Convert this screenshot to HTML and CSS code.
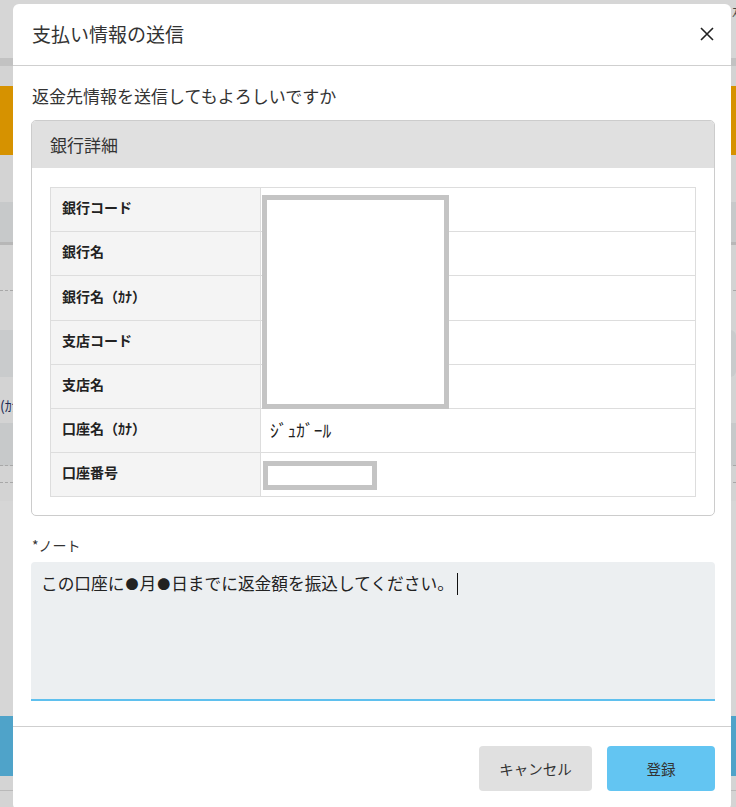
FILE: index.html
```html
<!DOCTYPE html>
<html lang="ja">
<head>
<meta charset="utf-8">
<title>支払い情報の送信</title>
<link rel="stylesheet" href="styles.css">
</head>
<body>
<div class="bg">
  <div class="bg-top"><span class="bg-corner">ｽ</span></div>
  <div class="bg-bar"></div>
  <div class="bg-gap20"></div>
  <div class="bg-orange"></div>
  <div class="bg-gap47"></div>
  <div class="bg-box1"></div>
  <div class="bg-dash45"></div>
  <div class="bg-gap40"></div>
  <div class="bg-box2"></div>
  <div class="bg-row"><span class="bg-kana">(ｶﾅ)</span></div>
  <div class="bg-box3"></div>
  <div class="bg-dash17"></div>
  <div class="bg-gap18"></div>
  <div class="bg-lower"></div>
  <div class="bg-blue"></div>
  <div class="bg-line"></div>
  <div class="bg-rest"></div>
</div>

<div class="modal">
  <div class="modal-header">
    <h1 class="modal-title">支払い情報の送信</h1>
    <button class="close-btn" aria-label="閉じる">
      <svg width="14" height="14" viewBox="0 0 14 14"><path d="M1 1 L13 13 M13 1 L1 13" stroke="#222" stroke-width="1.6" fill="none"/></svg>
    </button>
  </div>
  <div class="modal-body">
    <p class="question">返金先情報を送信してもよろしいですか</p>
    <div class="card">
      <div class="card-header">銀行詳細</div>
      <div class="card-body">
        <div class="table-wrap">
          <table class="bank-table">
            <tr><th>銀行コード</th><td></td></tr>
            <tr><th>銀行名</th><td></td></tr>
            <tr class="tall"><th>銀行名（ｶﾅ）</th><td></td></tr>
            <tr><th>支店コード</th><td></td></tr>
            <tr><th>支店名</th><td></td></tr>
            <tr><th>口座名（ｶﾅ）</th><td class="kana-val">ｼﾞｭｶﾞｰﾙ</td></tr>
            <tr><th>口座番号</th><td></td></tr>
          </table>
          <div class="redact redact-big"></div>
          <div class="redact redact-small"></div>
        </div>
      </div>
    </div>
    <div class="note-label">*ノート</div>
    <div class="note-box">この口座に<span class="dot">●</span>月<span class="dot">●</span>日までに返金額を振込してください。<span class="caret"></span></div>
  </div>
  <div class="modal-footer">
    <button class="btn btn-cancel">キャンセル</button>
    <button class="btn btn-primary">登録</button>
  </div>
</div>
</body>
</html>
```

FILE: styles.css
```css
* { box-sizing: border-box; }

html, body {
  margin: 0;
  padding: 0;
  height: 807px;
  overflow: hidden;
}

body {
  font-family: "Noto Sans CJK JP", "Noto Sans", "Liberation Sans", sans-serif;
  color: #333;
  background: #d4d4d4;
  position: relative;
}

/* dimmed background page */
.bg { width: 100%; }
.bg-top { height: 58px; background: #d6d6d6; position: relative; }
.bg-corner { position: absolute; right: -2px; top: 5px; font-size: 12px; color: #444; line-height: 14px; }
.bg-bar { height: 8px; background: #c2c2c2; }
.bg-gap20 { height: 20px; background: #d3d3d3; }
.bg-orange { height: 69px; background: #d69200; }
.bg-gap47 { height: 47px; background: #d3d3d3; }
.bg-box1 { height: 43px; background: #c7c9ca; border-bottom: 3px solid #b7b7b7; }
.bg-dash45 { height: 46px; background: #d3d3d3; border-bottom: 1px dashed #a8a8a8; }
.bg-gap40 { height: 39px; background: #d3d3d3; }
.bg-box2 { height: 47px; background: #c9cbcc; border-radius: 0 6px 6px 0; }
.bg-row { height: 46px; background: #d3d3d3; display: flex; align-items: center; }
.bg-kana { font-size: 14px; color: #1a2a55; line-height: 16px; margin-top: 10px; }
.bg-box3 { height: 43px; background: #c7c9ca; border-bottom: 1px dashed #a8a8a8; }
.bg-dash17 { height: 17px; background: #d3d3d3; border-bottom: 1px dashed #a8a8a8; }
.bg-gap18 { height: 18px; background: #d3d3d3; }
.bg-lower { height: 215px; background: #d6d6d6; }
.bg-blue { height: 60px; background: #4fa3c9; }
.bg-line { height: 15px; background: #d4d4d4; border-bottom: 1px solid #b9b9b9; }
.bg-rest { height: 40px; background: #d4d4d4; }

/* modal */
.modal {
  position: absolute;
  left: 13px;
  top: 4px;
  width: 718px;
  height: 806px;
  background: #fff;
  border-radius: 6px;
  display: flex;
  flex-direction: column;
}

.modal-header {
  height: 62px;
  border-bottom: 1px solid #cfcfcf;
  display: flex;
  align-items: center;
  justify-content: space-between;
  padding: 0 17px 0 19px;
}

.modal-title {
  margin: 0;
  font-size: 19px;
  font-weight: 400;
  line-height: 26px;
  color: #333;
  margin-top: -2px;
}

.close-btn {
  border: 0;
  background: none;
  padding: 0;
  width: 14px;
  height: 14px;
  display: flex;
  margin-top: -1px;
  cursor: pointer;
}

.modal-body {
  padding: 18px 16px 25px 18px;
  border-bottom: 1px solid #cfcfcf;
}

.question {
  margin: 0 0 12px 1px;
  font-size: 17px;
  line-height: 24px;
  color: #333;
}

.card {
  border: 1px solid #cccccc;
  border-radius: 5px;
  overflow: hidden;
}

.card-header {
  height: 47px;
  background: #e0e0e0;
  font-size: 17px;
  line-height: 47px;
  padding-left: 18px;
  color: #333;
}

.card-body {
  padding: 19px 18px 18px 18px;
}

.table-wrap { position: relative; }

.bank-table {
  width: 100%;
  border-collapse: collapse;
  border: 1px solid #dddddd;
}

.bank-table th,
.bank-table td {
  border: 1px solid #dddddd;
  height: 44px;
  padding: 0;
  vertical-align: middle;
}

.bank-table tr.tall th,
.bank-table tr.tall td { height: 45px; }

.bank-table th {
  width: 210px;
  background: #f4f4f4;
  text-align: left;
  font-size: 14px;
  font-weight: 700;
  color: #222;
  padding: 0 0 5px 11px;
  line-height: 18px;
}

.bank-table td {
  font-size: 15px;
  padding-left: 9px;
  color: #222;
}

.bank-table td.kana-val {
  font-size: 17.5px;
  padding-bottom: 3px;
}

.redact {
  position: absolute;
  border: 5px solid #c4c4c4;
  background: #fff;
}

.redact-big {
  left: 212px;
  top: 8px;
  width: 187px;
  height: 214px;
}

.redact-small {
  left: 213px;
  top: 274px;
  width: 114px;
  height: 29px;
}

.note-label {
  margin-top: 19px;
  font-size: 14px;
  line-height: 20px;
  padding-left: 1px;
  color: #333;
}

.note-box {
  margin-top: 7px;
  height: 139px;
  background: #eceff1;
  border-bottom: 2px solid #5fc0ee;
  border-radius: 4px 4px 0 0;
  padding: 9px 10px;
  font-size: 16.7px;
  line-height: 24px;
  color: #222;
}

.dot {
  font-size: 13px;
  margin: 0 1px;
  vertical-align: 1px;
}

.caret {
  display: inline-block;
  width: 1px;
  height: 22px;
  background: #111;
  vertical-align: -5px;
  margin-left: 3px;
}

.modal-footer {
  display: flex;
  justify-content: flex-end;
  gap: 15px;
  padding: 19px 16px 0 0;
}

.btn {
  height: 45px;
  border: 0;
  border-radius: 4px;
  font-family: "Noto Sans CJK JP", "Noto Sans", sans-serif;
  font-size: 14.5px;
  color: #333;
  cursor: pointer;
}

.btn-cancel {
  width: 113px;
  background: #e0e0e0;
}

.btn-primary {
  width: 108px;
  background: #63c5f2;
}
```
